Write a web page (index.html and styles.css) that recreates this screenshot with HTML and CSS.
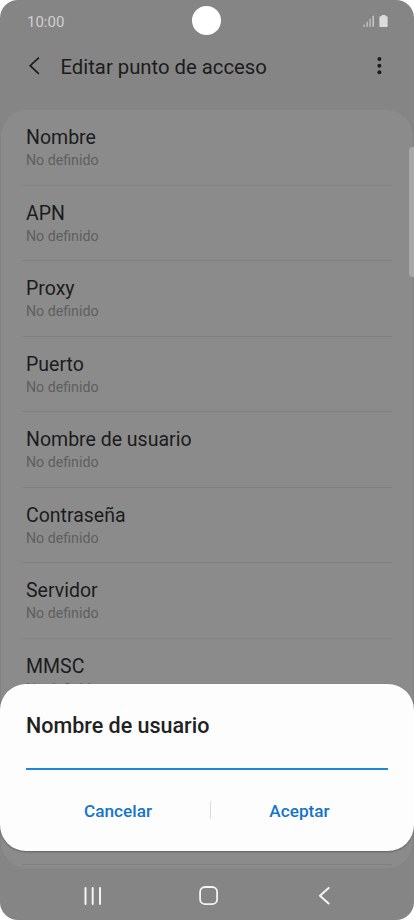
FILE: index.html
```html
<!DOCTYPE html>
<html lang="es">
<head>
    <meta charset="UTF-8">
    <meta name="viewport" content="width=device-width, initial-scale=1.0">
    <title>Editar punto de acceso</title>
    <link rel="stylesheet" href="styles.css">
</head>
<body>
    <div class="phone">
        <div class="status-bar">
            <span class="status-time">10:00</span>
            <div class="status-icons">
                <svg width="12" height="13" viewBox="0 0 12 13" fill="#cecece">
                    <rect x="0.5" y="9.6" width="1.2" height="2.2"/>
                    <rect x="3.5" y="6.8" width="1.2" height="5"/>
                    <rect x="6.5" y="3.8" width="1.2" height="8"/>
                    <rect x="9.5" y="0.8" width="1.4" height="11"/>
                </svg>
                <svg width="9" height="13" viewBox="0 0 9 13" fill="#dcdcdc">
                    <path d="M2.7 0h3.8v1.2h1A1 1 0 0 1 8.6 2.2v8.8a1 1 0 0 1-1 1H1.4a1 1 0 0 1-1-1V2.2a1 1 0 0 1 1-1h1.3z"/>
                </svg>
            </div>
            <div class="camera"></div>
        </div>

        <header class="app-bar">
            <svg class="back-icon" width="12" height="18" viewBox="0 0 12 18" fill="none" stroke="#1c1c1c" stroke-width="1.7">
                <path d="M10.9 0.6L2.2 8.7l8.7 8.1"/>
            </svg>
            <h1 class="app-title">Editar punto de acceso</h1>
            <svg class="more-icon" width="6" height="18" viewBox="0 0 6 18" fill="#1c1c1c">
                <circle cx="3.4" cy="2.1" r="2"/>
                <circle cx="3.4" cy="8.7" r="2"/>
                <circle cx="3.4" cy="15.3" r="2"/>
            </svg>
        </header>

        <main class="settings-card">
            <div class="setting"><h2 class="setting-name">Nombre</h2><p class="setting-value">No definido</p></div>
            <div class="setting"><h2 class="setting-name">APN</h2><p class="setting-value">No definido</p></div>
            <div class="setting"><h2 class="setting-name">Proxy</h2><p class="setting-value">No definido</p></div>
            <div class="setting"><h2 class="setting-name">Puerto</h2><p class="setting-value">No definido</p></div>
            <div class="setting"><h2 class="setting-name">Nombre de usuario</h2><p class="setting-value">No definido</p></div>
            <div class="setting"><h2 class="setting-name">Contraseña</h2><p class="setting-value">No definido</p></div>
            <div class="setting"><h2 class="setting-name">Servidor</h2><p class="setting-value">No definido</p></div>
            <div class="setting"><h2 class="setting-name">MMSC</h2><p class="setting-value">No definido</p></div>
            <div class="setting"></div>
            <div class="setting"></div>
        </main>

        <nav class="nav-bar">
            <svg width="18" height="18" viewBox="0 0 18 18" fill="none" stroke="#f4f4f4" stroke-width="2" stroke-linecap="round">
                <path d="M1.5 1v16M8.7 1v16M16 1v16"/>
            </svg>
            <svg width="20" height="20" viewBox="0 0 20 20" fill="none" stroke="#f4f4f4" stroke-width="1.8">
                <rect x="1.1" y="1" width="17" height="17.2" rx="5"/>
            </svg>
            <svg width="12" height="18" viewBox="0 0 12 18" fill="none" stroke="#f4f4f4" stroke-width="2" stroke-linecap="round">
                <path d="M10.6 1L2 8.7l8.6 7.8"/>
            </svg>
        </nav>

        <div class="edge-handle"></div>

        <!-- dialog -->
        <div class="dialog">
            <h2 class="dialog-title">Nombre de usuario</h2>
            <div class="dialog-input"></div>
            <div class="dialog-buttons">
                <button class="dialog-button">Cancelar</button>
                <span class="button-divider"></span>
                <button class="dialog-button">Aceptar</button>
            </div>
        </div>
    </div>
</body>
</html>
```

FILE: styles.css
```css
* {
    box-sizing: border-box;
    margin: 0;
    padding: 0;
}

body {
    background: #fff;
    font-family: Roboto, "Liberation Sans", sans-serif;
}

svg {
    display: block;
}

.phone {
    position: relative;
    display: flex;
    flex-direction: column;
    width: 414px;
    height: 920px;
    background: #858585;
    border-radius: 18px;
    overflow: hidden;
}

/* status bar */
.status-bar {
    position: relative;
    display: flex;
    justify-content: space-between;
    height: 42px;
    padding: 12px 26px 0 27px;
}

.status-time {
    font-size: 15px;
    line-height: 20px;
    color: #d0d0d0;
}

.status-icons {
    display: flex;
    gap: 4px;
    padding-top: 3px;
}

.camera {
    position: absolute;
    top: 6px;
    left: 192px;
    width: 29px;
    height: 29px;
    border-radius: 50%;
    background: #fff;
}

/* app bar */
.app-bar {
    display: flex;
    align-items: center;
    height: 48px;
    margin-bottom: 20px;
    padding: 0 32px 0 28px;
}

.app-title {
    flex: 1;
    margin-left: 20.5px;
    padding-top: 2px;
    font-size: 20.3px;
    font-weight: 400;
    color: #1c1c1c;
}

/* settings list */
.settings-card {
    height: 758px;
    background: #8b8b8b;
    border-left: 1px solid #838383;
    border-right: 1px solid #838383;
    border-radius: 26px;
    overflow: hidden;
}

.setting {
    height: 75.5px;
    margin: 0 21px;
    padding: 15.4px 4px 0;
    border-bottom: 1px solid #7f7f7f;
}

.setting-name {
    font-size: 19.5px;
    font-weight: 400;
    line-height: 26px;
    color: #1c1c1c;
}

.setting-value {
    font-size: 14.2px;
    line-height: 18px;
    color: #5f5f5f;
}

/* navigation */
.nav-bar {
    display: flex;
    align-items: center;
    justify-content: space-between;
    height: 52px;
    padding: 3px 84px 0 84px;
}

.nav-bar svg:nth-child(2) {
    margin-right: 2px;
}

.edge-handle {
    position: absolute;
    top: 147px;
    right: 0;
    width: 5px;
    height: 130px;
    border-radius: 4px 0 0 4px;
    background: #a8a8a8;
}

/* dialog */
.dialog {
    position: absolute;
    top: 684px;
    left: 0;
    width: 414px;
    height: 167px;
    padding: 28px 26px 0;
    background: #fdfdfd;
    border-radius: 26px;
    box-shadow: 0 1px 2px rgba(0, 0, 0, 0.3);
}

.dialog-title {
    font-size: 21.5px;
    font-weight: 500;
    line-height: 28px;
    color: #222;
}

.dialog-input {
    height: 30px;
    border-bottom: 2px solid #1f86dc;
}

.dialog-buttons {
    display: flex;
    align-items: center;
    height: 52px;
    margin-top: 14px;
}

.dialog-button {
    flex: 1;
    padding-top: 1px;
    border: none;
    background: none;
    font-family: inherit;
    font-size: 17.2px;
    font-weight: 500;
    color: #1474cc;
}

.dialog-button:first-child {
    flex: 0 0 184px;
}

.button-divider {
    width: 1px;
    height: 18px;
    background: #dcdcdc;
}
```
